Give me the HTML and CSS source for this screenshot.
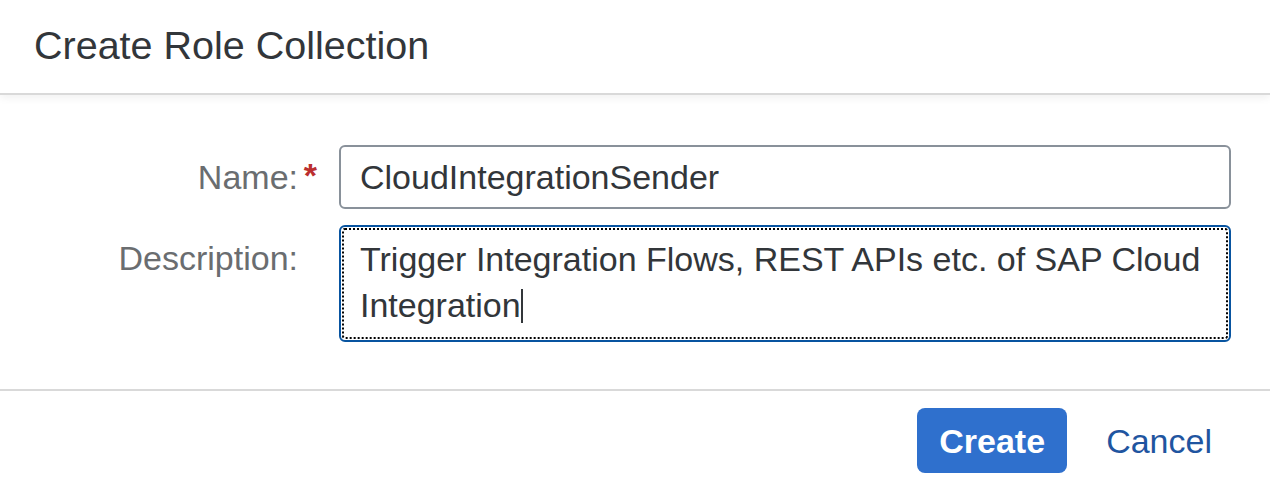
FILE: index.html
```html
<!DOCTYPE html>
<html lang="en">
<head>
<meta charset="utf-8">
<title>Create Role Collection</title>
<link rel="stylesheet" href="styles.css">
</head>
<body>
<div class="dialog">
  <header class="dialog-header">
    <h1 class="dialog-title">Create Role Collection</h1>
  </header>
  <main class="dialog-content">
    <form class="form">
      <label class="form-label form-label-single required" for="name">Name:</label>
      <div class="input">
        <span class="input-value" id="name">CloudIntegrationSender</span>
      </div>
      <label class="form-label form-label-multi" for="desc">Description:</label>
      <div class="textarea" id="desc" role="textbox">Trigger Integration Flows, REST APIs etc. of SAP Cloud Integration<span class="caret"></span></div>
    </form>
  </main>
  <footer class="dialog-footer">
    <button class="btn btn-emphasized" type="button">Create</button>
    <button class="btn btn-transparent" type="button">Cancel</button>
  </footer>
</div>
</body>
</html>
```

FILE: styles.css
```css
* { box-sizing: border-box; }

html, body {
  margin: 0;
  padding: 0;
  background: #ffffff;
}

body {
  font-family: "Liberation Sans", Arial, sans-serif;
  color: #32363a;
}

.dialog {
  width: 1270px;
  height: 490px;
  display: flex;
  flex-direction: column;
  background: #ffffff;
  overflow: hidden;
}

.dialog-header {
  height: 95px;
  flex: none;
  display: flex;
  align-items: center;
  padding: 0 34px 2px;
  border-bottom: 2px solid #d9d9d9;
  box-shadow: 0 3px 8px rgba(0, 0, 0, 0.06);
  position: relative;
  z-index: 1;
}

.dialog-title {
  margin: 0;
  font-size: 39.5px;
  font-weight: normal;
  color: #32363a;
  line-height: 1;
}

.dialog-content {
  flex: 1;
  padding: 50px 39px 0 0;
}

.form {
  display: grid;
  grid-template-columns: 300px 1fr;
  column-gap: 39px;
  row-gap: 16px;
  align-items: start;
}

.form-label {
  font-size: 34px;
  color: #6a6d70;
  text-align: right;
  line-height: 46px;
  position: relative;
  padding-right: 2px;
}

.form-label-single {
  line-height: 64px;
}

.form-label-multi {
  padding-top: 10px;
}

.form-label.required::after {
  content: "*";
  position: absolute;
  right: -17px;
  top: -2px;
  color: #bb2f2f;
  font-weight: bold;
  font-size: 34px;
}

.input {
  height: 64px;
  border: 2px solid #89919a;
  border-radius: 6px;
  display: flex;
  align-items: center;
  padding: 0 19px;
  background: #fff;
}

.input-value {
  font-size: 34px;
  color: #32363a;
}

.textarea {
  height: 117px;
  border: 2px solid #0854a0;
  border-radius: 6px;
  outline: 2px dotted #000;
  outline-offset: -5px;
  padding: 9px 19px 0;
  font-size: 34px;
  line-height: 46px;
  color: #32363a;
  background: #fff;
}

.caret {
  display: inline-block;
  width: 2px;
  height: 34px;
  background: #32363a;
  vertical-align: -6px;
}

.dialog-footer {
  flex: none;
  height: 101px;
  border-top: 2px solid #d9d9d9;
  display: flex;
  justify-content: flex-end;
  align-items: center;
  gap: 20px;
  padding: 0 39px 0 0;
}

.btn {
  font-family: "Liberation Sans", Arial, sans-serif;
  font-size: 34px;
  height: 65px;
  border-radius: 8px;
  border: none;
  cursor: pointer;
  line-height: 1;
}

.btn-emphasized {
  background: #2f70cd;
  color: #ffffff;
  font-weight: bold;
  padding: 0 22px;
  width: 150px;
}

.btn-transparent {
  background: transparent;
  color: #1f55a0;
  padding: 0 19px;
}
```
